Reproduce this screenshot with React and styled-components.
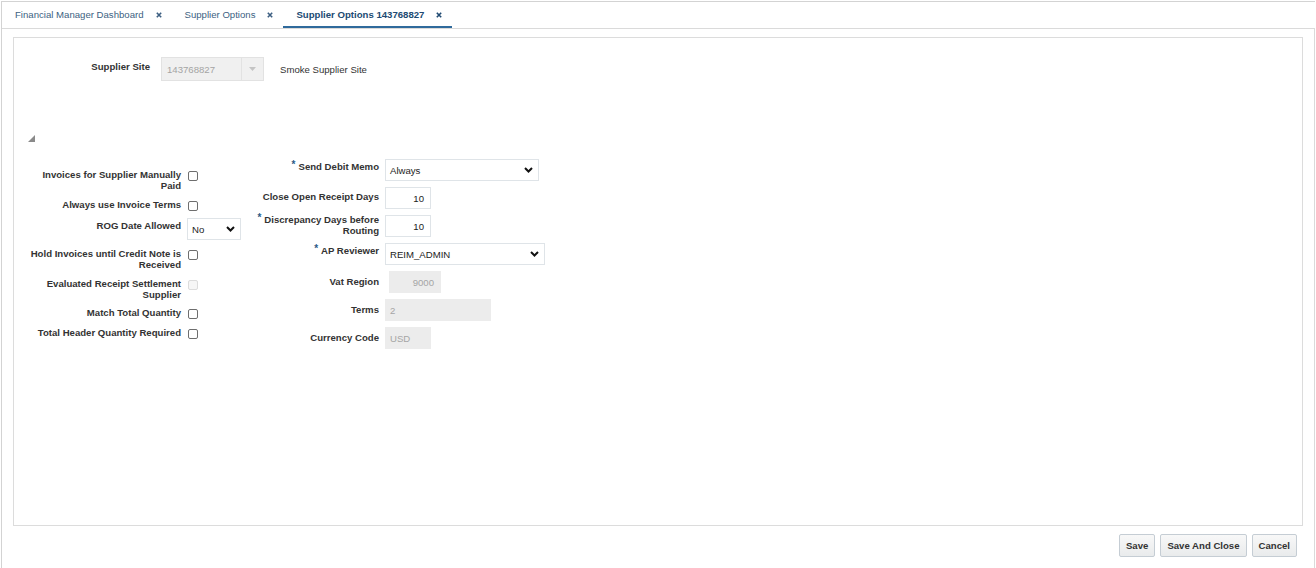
import styled, { createGlobalStyle } from "styled-components";

const GlobalStyle = createGlobalStyle`
  html, body {
    margin: 0;
    padding: 0;
    background: #ffffff;
    font-family: "Liberation Sans", Arial, sans-serif;
    color: #333333;
  }
  * { box-sizing: border-box; }
`;

const Page = styled.div`
  padding-top: 1px;
  height: 568px;
  overflow: hidden;
`;

const Shell = styled.div`
  margin-left: 1px;
  margin-right: 1px;
  height: 567px;
  border-top: 1px solid #d3d3d3;
  border-left: 1px solid #d3d3d3;
  display: flex;
  flex-direction: column;
`;

const TabBar = styled.div`
  display: flex;
  height: 26px;
`;

const Tab = styled.div`
  display: flex;
  align-items: center;
  gap: 11px;
  padding: 0 10px 0 13px;
  height: 26px;
  font-size: 9.6px;
  font-weight: ${p => (p.$active ? 700 : 400)};
  color: ${p => (p.$active ? "#204a72" : "#3d5f82")};
  border-bottom: 2px solid ${p => (p.$active ? "#2f6a9c" : "transparent")};
  padding-top: 1px;
`;

const Close = styled.svg`
  width: 6px;
  height: 6px;
  margin-left: 1px;
`;

const Content = styled.div`
  flex: 1;
  border-top: 1px solid #dadada;
  border-right: 1px solid #dadada;
  padding: 8px 11px 0 11px;
`;

const Panel = styled.div`
  height: 489px;
  border: 1px solid #dcdcdc;
  display: flex;
  flex-direction: column;
`;

const SiteRow = styled.div`
  display: flex;
  align-items: flex-start;
  margin-top: 19px;
  padding-left: 15px;
`;

const Label = styled.div`
  width: ${p => p.$width}px;
  flex-shrink: 0;
  text-align: right;
  font-size: 9.6px;
  font-weight: 700;
  line-height: 11px;
  color: #333333;
  padding-top: ${p => p.$top || 0}px;
  padding-bottom: ${p => p.$bottom || 0}px;
`;

const SiteSelect = styled.div`
  margin-left: 11px;
  width: 103px;
  height: 24px;
  background: #f0f0f0;
  border: 1px solid #e2e2e2;
  display: flex;
  align-items: center;
  font-size: 9.6px;
  color: #a4a4a4;
`;

const SiteValue = styled.span`
  flex: 1;
  padding-left: 5px;
`;

const SiteArrow = styled.span`
  width: 22px;
  height: 100%;
  border-left: 1px solid #e2e2e2;
  display: flex;
  align-items: center;
  justify-content: center;
`;

const SiteName = styled.div`
  margin-left: 16px;
  padding-top: 7px;
  font-size: 9.6px;
  color: #333333;
`;

const Disclosure = styled.svg`
  width: 7px;
  height: 7px;
  margin: 54px 0 0 14px;
  display: block;
`;

const Form = styled.div`
  display: flex;
  align-items: flex-start;
  margin-top: 17px;
  padding-left: 15px;
`;

const LeftCol = styled.div`
  width: 225px;
  margin-top: 6px;
  display: flex;
  flex-direction: column;
`;

const CheckRow = styled.div`
  display: flex;
  align-items: flex-start;
  gap: 6px;
  padding: ${p => (p.$select ? "3px 0 4px" : p.$tight ? "4px 0 3px" : "4px 0")};
  min-height: 20px;
`;

const Box = styled.span`
  width: 10px;
  height: 10px;
  margin: 2px 0 0 1px;
  border: 1px solid ${p => (p.$disabled ? "#dcdcdc" : "#6e6e6e")};
  background: ${p => (p.$disabled ? "#f6f6f6" : "#ffffff")};
  border-radius: 2px;
  flex-shrink: 0;
`;

const RightCol = styled.div`
  display: flex;
  flex-direction: column;
  gap: 6px;
`;

const FieldRow = styled.div`
  display: flex;
  height: 22px;
  align-items: ${p => (p.$top ? "flex-start" : "center")};
  gap: 6px;
`;

const Req = styled.span`
  color: #2c5a86;
  font-size: 10px;
  position: relative;
  top: -2px;
  margin-right: 3px;
`;

const Select = styled.div`
  width: ${p => p.$width}px;
  height: 22px;
  border: 1px solid #dfe4e8;
  background: #ffffff;
  display: flex;
  align-items: center;
  justify-content: space-between;
  padding: 0 5px 0 4px;
  font-size: 9.6px;
  color: #222222;
`;

const Input = styled.div`
  width: ${p => p.$width}px;
  height: 22px;
  margin-left: ${p => p.$inset || 0}px;
  border: 1px solid ${p => (p.$readonly ? "#ececec" : "#dfe4e8")};
  background: ${p => (p.$readonly ? "#ececec" : "#ffffff")};
  display: flex;
  align-items: center;
  justify-content: ${p => (p.$alignRight ? "flex-end" : "flex-start")};
  padding: 0 6px 0 4px;
  font-size: 9.6px;
  color: ${p => (p.$readonly ? "#a5a5a5" : "#222222")};
`;

const Actions = styled.div`
  display: flex;
  justify-content: flex-end;
  gap: 5px;
  margin-top: 8px;
  padding-right: 6px;
`;

const Button = styled.button`
  height: 23px;
  padding: 0 6px;
  font-family: "Liberation Sans", Arial, sans-serif;
  font-size: 9.6px;
  font-weight: 700;
  color: #333333;
  background: linear-gradient(#f8f8f8, #e9ebec);
  border: 1px solid #c5cdd4;
  border-radius: 2px;
`;

const Chevron = () => (
  <svg width="9" height="6" viewBox="0 0 9 6">
    <polyline points="1,1 4.5,4.5 8,1" fill="none" stroke="#111" strokeWidth="2" />
  </svg>
);

const X = ({ color }) => (
  <Close viewBox="0 0 6 6">
    <path d="M0.8 0.8 L5.2 5.2 M5.2 0.8 L0.8 5.2" stroke={color} strokeWidth="1.6" />
  </Close>
);

const tabs = [
  { label: "Financial Manager Dashboard" },
  { label: "Supplier Options" },
  { label: "Supplier Options 143768827", active: true },
];

const checks = [
  { label: "Invoices for Supplier Manually Paid" },
  { label: "Always use Invoice Terms" },
  { label: "ROG Date Allowed", select: "No" },
  { label: "Hold Invoices until Credit Note is Received" },
  { label: "Evaluated Receipt Settlement Supplier", disabled: true, tight: true },
  { label: "Match Total Quantity" },
  { label: "Total Header Quantity Required" },
];

export default function App() {
  return (
    <Page>
      <GlobalStyle />
      <Shell>
        <TabBar>
          {tabs.map(t => (
            <Tab key={t.label} $active={t.active}>
              {t.label}
              <X color={t.active ? "#204a72" : "#3d5f82"} />
            </Tab>
          ))}
        </TabBar>
        <Content>
          <Panel>
            <SiteRow>
              <Label $width={121} $top={4}>Supplier Site</Label>
              <SiteSelect>
                <SiteValue>143768827</SiteValue>
                <SiteArrow>
                  <svg width="7" height="4" viewBox="0 0 7 4">
                    <polygon points="0,0 7,0 3.5,4" fill="#c4c4c4" />
                  </svg>
                </SiteArrow>
              </SiteSelect>
              <SiteName>Smoke Supplier Site</SiteName>
            </SiteRow>

            <Disclosure viewBox="0 0 7 7">
              <polygon points="7,0 7,7 0,7" fill="#8a8a8a" />
            </Disclosure>

            <Form>
              <LeftCol>
                {checks.map(c => (
                  <CheckRow key={c.label} $select={!!c.select} $tight={c.tight}>
                    <Label $width={152} $top={c.select ? 1.5 : 0}>{c.label}</Label>
                    {c.select ? (
                      <Select $width={54}>
                        {c.select}
                        <Chevron />
                      </Select>
                    ) : (
                      <Box $disabled={c.disabled} />
                    )}
                  </CheckRow>
                ))}
              </LeftCol>

              <RightCol>
                <FieldRow $top>
                  <Label $width={125} $top={1.5}><Req>*</Req>Send Debit Memo</Label>
                  <Select $width={154}>
                    Always
                    <Chevron />
                  </Select>
                </FieldRow>
                <FieldRow>
                  <Label $width={125} $bottom={3}>Close Open Receipt Days</Label>
                  <Input $width={46} $alignRight>10</Input>
                </FieldRow>
                <FieldRow>
                  <Label $width={125} $bottom={2}><Req>*</Req>Discrepancy Days before Routing</Label>
                  <Input $width={46} $alignRight>10</Input>
                </FieldRow>
                <FieldRow $top>
                  <Label $width={125} $top={1.5}><Req>*</Req>AP Reviewer</Label>
                  <Select $width={160}>
                    REIM_ADMIN
                    <Chevron />
                  </Select>
                </FieldRow>
                <FieldRow>
                  <Label $width={125} $bottom={2}>Vat Region</Label>
                  <Input $width={52} $inset={4} $readonly $alignRight>9000</Input>
                </FieldRow>
                <FieldRow>
                  <Label $width={125} $bottom={2}>Terms</Label>
                  <Input $width={106} $readonly>2</Input>
                </FieldRow>
                <FieldRow>
                  <Label $width={125} $bottom={2}>Currency Code</Label>
                  <Input $width={46} $readonly>USD</Input>
                </FieldRow>
              </RightCol>
            </Form>
          </Panel>
          <Actions>
            <Button>Save</Button>
            <Button>Save And Close</Button>
            <Button>Cancel</Button>
          </Actions>
        </Content>
      </Shell>
    </Page>
  );
}
